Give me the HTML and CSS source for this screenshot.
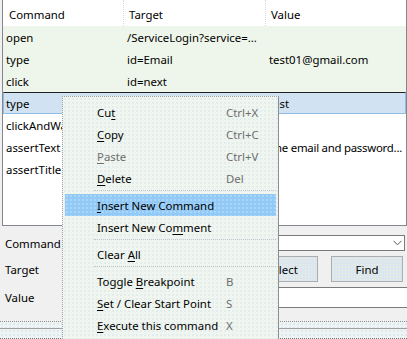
FILE: index.html
```html
<!DOCTYPE html>
<html>
<head>
<meta charset="utf-8">
<link rel="stylesheet" href="styles.css">
</head>
<body>
<div class="app">
  <div class="grid">
    <div class="hdr">
      <div class="hc c1">Command</div>
      <div class="hc c2">Target</div>
      <div class="hc c3">Value</div>
    </div>
    <div class="row done"><div class="c c1">open</div><div class="c c2">/ServiceLogin?service=...</div><div class="c c3"></div></div>
    <div class="row done"><div class="c c1">type</div><div class="c c2">id=Email</div><div class="c c3">test01@gmail.com</div></div>
    <div class="row done"><div class="c c1">click</div><div class="c c2">id=next</div><div class="c c3"></div></div>
    <div class="row sel"><div class="c c1">type</div><div class="c c2">id=Passwd</div><div class="c c3">test</div></div>
    <div class="row"><div class="c c1">clickAndWait</div><div class="c c2">id=signIn</div><div class="c c3"></div></div>
    <div class="row"><div class="c c1">assertText</div><div class="c c2">id=errormsg</div><div class="c c3 tight">The email and password...</div></div>
    <div class="row"><div class="c c1">assertTitle</div><div class="c c2">Gmail</div><div class="c c3"></div></div>
    <div class="filler"></div>
  </div>

  <div class="form">
    <div class="frow r1">
      <div class="lbl">Command</div>
      <div class="combo">
        <svg class="chev" width="9" height="6" viewBox="0 0 9 6"><path d="M0.5 0.8 L4.5 4.8 L8.5 0.8" fill="none" stroke="#555" stroke-width="1"/></svg>
      </div>
    </div>
    <div class="frow r2">
      <div class="lbl">Target</div>
      <div class="tinput"></div>
      <div class="btn">Select</div>
      <div class="btn">Find</div>
    </div>
    <div class="frow r3">
      <div class="lbl">Value</div>
      <div class="vinput"></div>
    </div>
  </div>

  <div class="bottom">
    <div class="split"></div>
    <div class="status"></div>
  </div>

  <div class="menu">
    <div class="mi"><span class="mt">Cu<u>t</u></span><span class="ms">Ctrl+X</span></div>
    <div class="mi"><span class="mt"><u>C</u>opy</span><span class="ms">Ctrl+C</span></div>
    <div class="mi dis"><span class="mt"><u>P</u>aste</span><span class="ms">Ctrl+V</span></div>
    <div class="mi"><span class="mt"><u>D</u>elete</span><span class="ms">Del</span></div>
    <div class="msep"></div>
    <div class="mi hl"><span class="mt"><u>I</u>nsert New Command</span><span class="ms"></span></div>
    <div class="mi"><span class="mt">Insert New Co<u>m</u>ment</span><span class="ms"></span></div>
    <div class="msep"></div>
    <div class="mi"><span class="mt">Clear <u>A</u>ll</span><span class="ms"></span></div>
    <div class="msep"></div>
    <div class="mi"><span class="mt">Toggle <u>B</u>reakpoint</span><span class="ms">B</span></div>
    <div class="mi"><span class="mt"><u>S</u>et / Clear Start Point</span><span class="ms">S</span></div>
    <div class="mi"><span class="mt"><u>E</u>xecute this command</span><span class="ms">X</span></div>
  </div>
</div>
</body>
</html>
```

FILE: styles.css
```css
html, body {
  margin: 0;
  padding: 0;
  background: #f0f0f0;
}
body {
  width: 407px;
  height: 339px;
  overflow: hidden;
  font-family: "Noto Sans", "Open Sans", sans-serif;
  font-size: 11.4px;
  color: #000;
}
.app {
  position: relative;
  width: 407px;
  height: 339px;
  background: #f0f0f0;
}

/* ---- grid ---- */
.grid {
  margin-left: 2px;
  width: 403px;
  height: 225px;
  border: 1px solid #828790;
  border-top: none;
  background: #fff;
  display: flex;
  flex-direction: column;
}
.hdr {
  display: grid;
  grid-template-columns: 121px 142px 1fr;
  height: 26px;
  background: #fff;
}
.hc {
  line-height: 30px;
  padding-left: 6px;
  border-right: 1px dotted #cfdbe6;
  overflow: hidden;
  white-space: nowrap;
}
.hc.c2 { padding-left: 5px; }
.hc.c3 { padding-left: 5px; border-right: none; }
.row {
  display: grid;
  grid-template-columns: 121px 142px 1fr;
  height: 22px;
  box-sizing: border-box;
}
.row.done { background: #eef5ea; }
.row.sel {
  background: #d1e3f3;
  border: 1px solid #8ebde6;
  border-top: 1px solid #222;
}
.c {
  line-height: 24px;
  padding-left: 3px;
  white-space: nowrap;
  overflow: hidden;
}
.c.tight { letter-spacing: -0.25px; }
.row.sel .c { line-height: 22px; padding-left: 2px; }
.filler { flex: 1; }

/* ---- form ---- */
.form {
  display: flex;
  flex-direction: column;
}
.frow {
  display: flex;
  align-items: center;
}
.lbl {
  width: 70px;
  padding-left: 5px;
  box-sizing: border-box;
}
.r1 { margin-top: 9px; height: 16px; }
.combo {
  flex: 1;
  margin-right: 2px;
  height: 14px;
  border: 1px solid #7a7a7a;
  background: #fff;
  display: flex;
  justify-content: flex-end;
  align-items: center;
  padding-right: 2px;
}
.r2 { margin-top: 5px; height: 26px; }
.tinput {
  width: 168px;
  height: 20px;
  border: 1px solid #7a7a7a;
  background: #fff;
}
.btn {
  width: 70px;
  height: 24px;
  margin-left: 6px;
  border: 1px solid #adadad;
  background-color: #dce6ee;
  background-image: radial-gradient(circle, #eef0d8 0.7px, transparent 0.9px);
  background-size: 3px 3px;
  display: flex;
  align-items: center;
  justify-content: center;
}
.btn + .btn { margin-left: 13px; }
.r3 { margin-top: 5px; height: 21px; }
.vinput {
  flex: 1;
  height: 19px;
  border: 1px solid #7a7a7a;
  border-right: none;
  background: #fff;
}

/* ---- bottom ---- */
.bottom {
  margin-top: 13px;
}
.split {
  height: 6px;
  border-top: 1px dotted #8c8c8c;
  border-bottom: 1px solid #a0a0a0;
  background-color: #eef3f4;
  background-image: radial-gradient(circle, #c9d9e6 0.6px, transparent 0.8px);
  background-size: 4px 4px;
}
.status {
  height: 9px;
  background-color: #eef3f4;
  background-image: radial-gradient(circle, #c9d9e6 0.6px, transparent 0.8px);
  background-size: 4px 4px;
  border-bottom: 1px dotted #777;
}

/* ---- context menu ---- */
.menu {
  position: absolute;
  left: 62px;
  top: 96px;
  width: 217px;
  padding: 4px 2px 6px 2px;
  border: 1px dotted #9aa0a6;
  border-right: 1px solid #8d8d8d;
  background-color: #f0f6ef;
  background-image: radial-gradient(circle, #d2e2ee 0.6px, transparent 0.8px);
  background-size: 4px 4px;
  box-sizing: border-box;
}
.mi {
  height: 22px;
  display: flex;
  align-items: center;
  padding-left: 32px;
}
.mt {
  width: 129px;
  white-space: nowrap;
}
.ms { color: #6d6d6d; }
.mi.dis .mt { color: #6d6d6d; }
.mi.hl {
  background-color: #91c9f7;
  background-image: radial-gradient(circle, #cbe4f7 0.6px, transparent 0.8px);
  background-size: 4px 4px;
}
.msep {
  height: 0;
  margin: 1px 0 3px 29px;
  border-top: 1px dotted #c3c7c9;
}
u { text-decoration-thickness: 1px; text-underline-offset: 2px; }
```
